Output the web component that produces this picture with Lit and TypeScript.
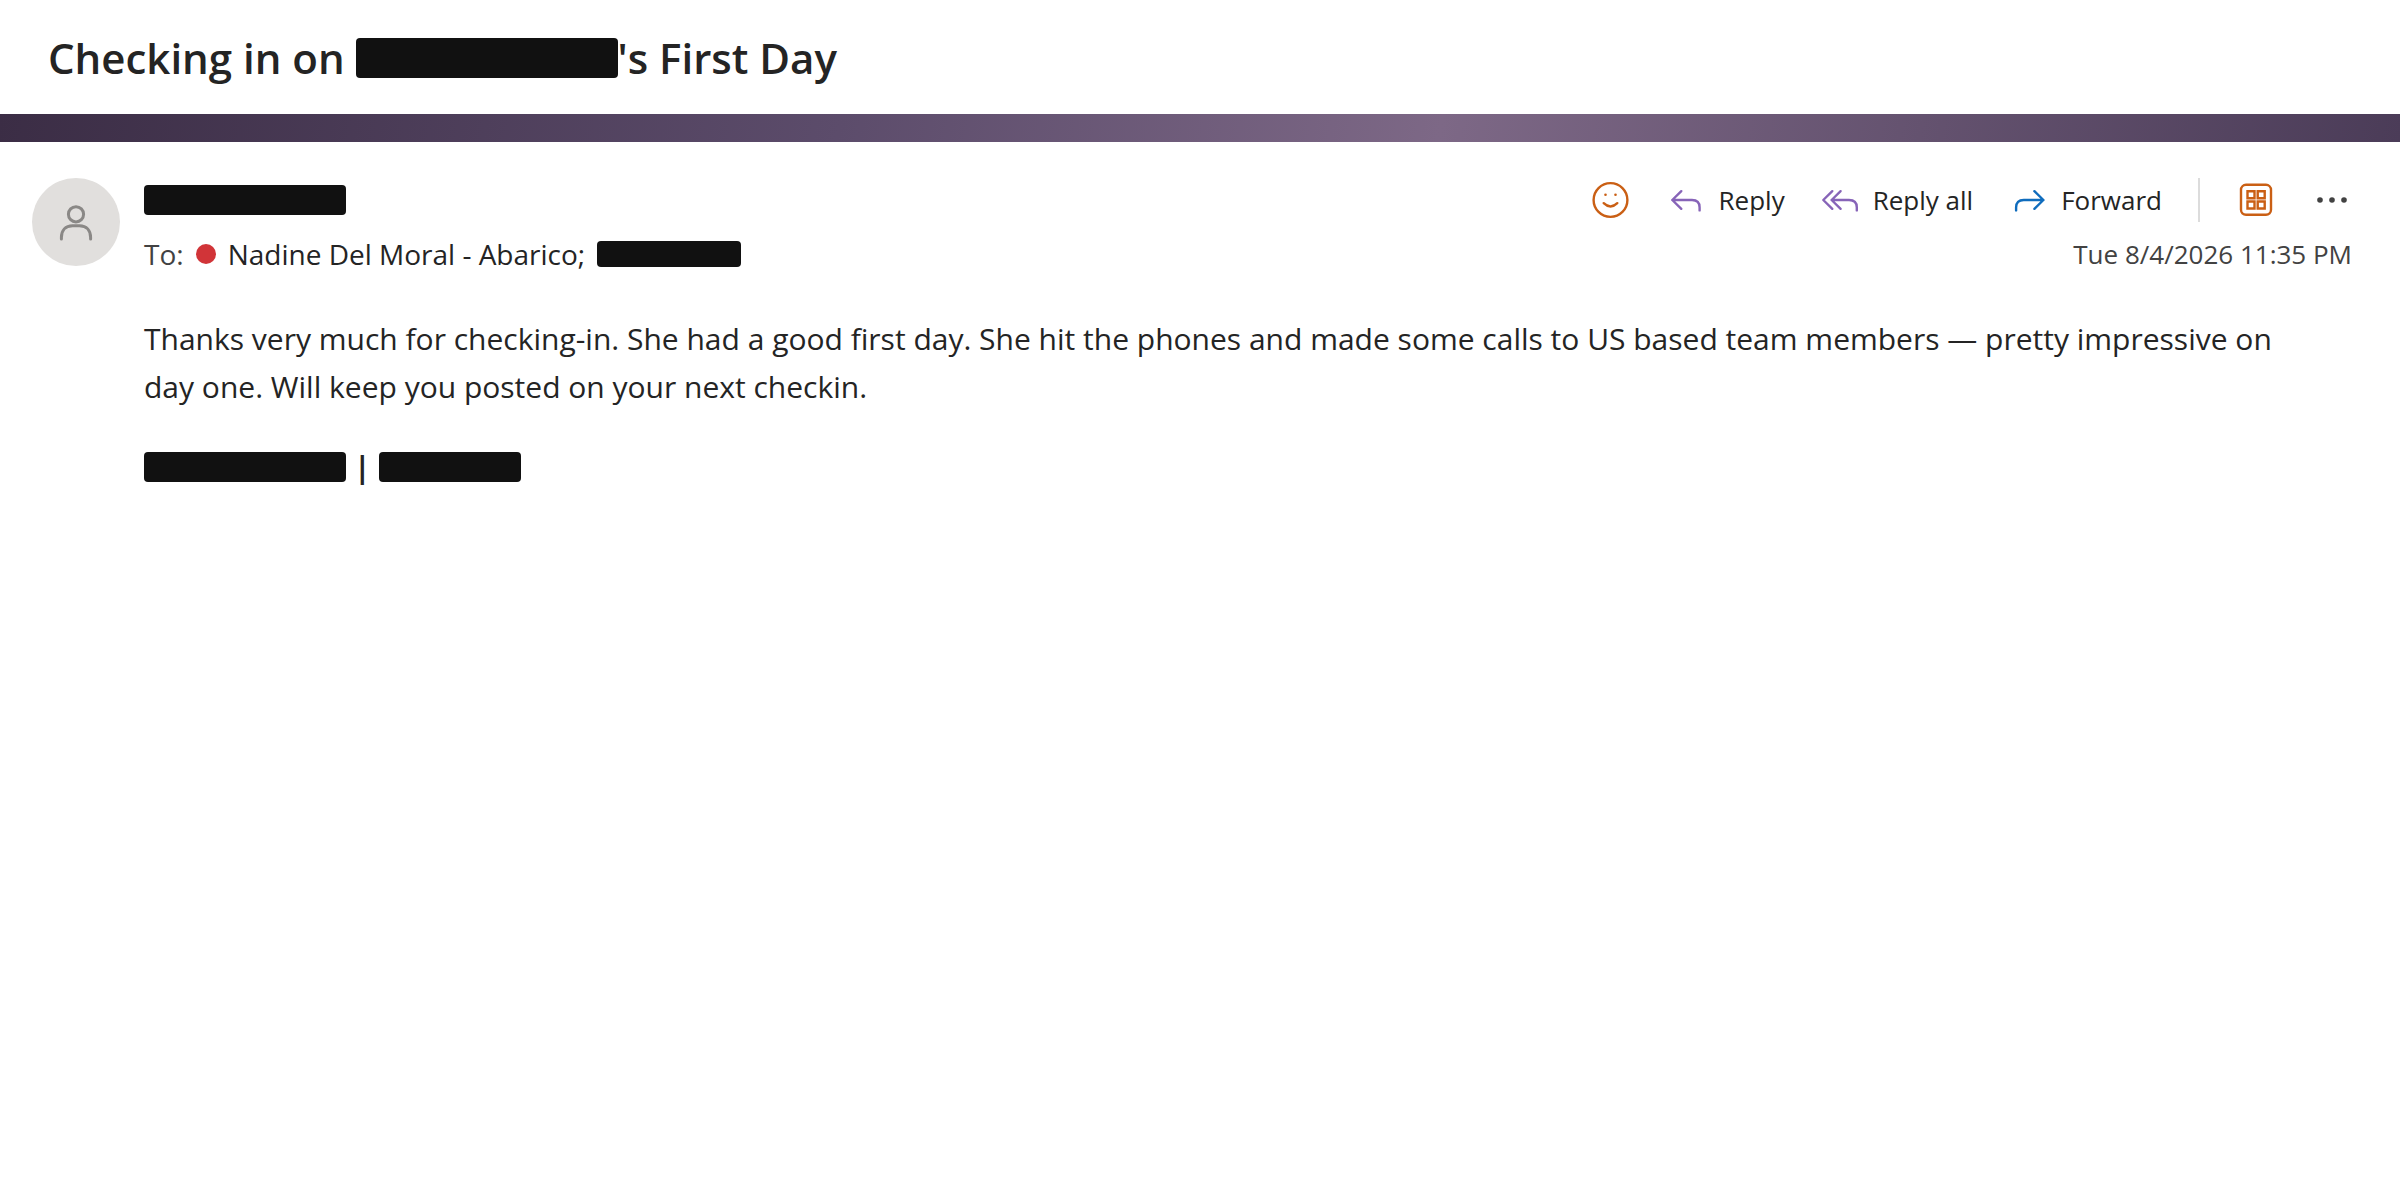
import { LitElement, html, css, svg } from "lit";
import { customElement } from "lit/decorators.js";

const person = svg`<svg class="person" viewBox="0 0 44 44" aria-hidden="true">
  <circle cx="22" cy="14.3" r="7.6"/><path d="M7.4 39V37.5C7.4 30.5 11.5 25.7 18.5 25.7H25.5C32.5 25.7 36.6 30.5 36.6 37.5V39"/></svg>`;

const smile = svg`<svg class="icon orange" viewBox="0 0 40 40" aria-hidden="true">
  <circle cx="19.5" cy="20" r="16.9"/><path d="M12.7 23.2Q19.5 29.8 26.3 23.2"/>
  <circle class="solid" cx="14.5" cy="14.8" r="1.3"/><circle class="solid" cx="24.5" cy="14.8" r="1.3"/></svg>`;

const reply = svg`<svg class="icon purple" viewBox="0 0 40 40" aria-hidden="true">
  <path d="M14.3 11.2L5.3 20L14.3 28.8M5.3 20H25C30 20 32.6 22.6 32.6 27.4V30.4"/></svg>`;

const replyAll = svg`<svg class="icon purple" viewBox="0 0 40 40" aria-hidden="true">
  <path d="M11.3 11.2L2.3 20L11.3 28.8M19.6 11.2L10.6 20L19.6 28.8M10.6 20H28C33 20 35.8 22.6 35.8 27.4V30.4"/></svg>`;

const forward = svg`<svg class="icon blue" viewBox="0 0 40 40" aria-hidden="true">
  <path d="M25.4 11.2L34.4 20L25.4 28.8M34.4 20H14.7C9.7 20 7.1 22.6 7.1 27.4V30.4"/></svg>`;

const apps = svg`<svg class="icon orange" viewBox="0 0 40 40" aria-hidden="true">
  <rect x="5" y="4.8" width="30" height="30" rx="5"/>
  <path class="tiles" d="M11.5 11.3h7v7h-7zM21.7 11.3h7v7h-7zM11.5 21.5h7v7h-7zM21.7 21.5h7v7h-7z"/></svg>`;

const more = svg`<svg class="icon grey" viewBox="0 0 40 40" aria-hidden="true">
  <circle class="solid" cx="8" cy="20" r="2.8"/><circle class="solid" cx="20" cy="20" r="2.8"/><circle class="solid" cx="32" cy="20" r="2.8"/></svg>`;

@customElement("app-root")
export class AppRoot extends LitElement {
  static styles = css`
    :host {
      display: block;
      min-height: 100vh;
      background: #fff;
      color: #242424;
      font-family: "Open Sans", sans-serif;
    }
    .subject {
      display: flex;
      align-items: center;
      margin: 0;
      padding: 32px 48px 30px;
      font-size: 42px;
      font-weight: 600;
      line-height: 52px;
      white-space: pre;
    }
    .band {
      height: 28px;
      background: linear-gradient(100deg, #3b2d45 0%, #5c4c6b 35%, #7d6886 60%, #4b3c58 100%);
    }
    .redacted {
      display: inline-block;
      border-radius: 4px;
      background: #111;
    }
    .r-subject { width: 262px; height: 40px; }
    .r-name { width: 202px; height: 30px; }
    .r-to { width: 144px; height: 26px; }
    .r-role { width: 142px; height: 30px; }
    .message {
      display: grid;
      grid-template-columns: 88px 1fr;
      column-gap: 24px;
      padding: 36px 48px 48px 32px;
    }
    .avatar {
      display: flex;
      align-items: center;
      justify-content: center;
      width: 88px;
      height: 88px;
      border-radius: 50%;
      background: #e1dfdd;
    }
    .person {
      width: 44px;
      height: 44px;
      fill: none;
      stroke: #8a8886;
      stroke-width: 3;
      stroke-linecap: round;
    }
    .row {
      display: flex;
      align-items: center;
      justify-content: space-between;
    }
    .top { height: 44px; }
    .second { margin-top: 12px; line-height: 40px; }
    .to { display: flex; align-items: center; font-size: 28px; }
    .label, .date { color: #424242; }
    .dot {
      width: 20px;
      height: 20px;
      margin: 0 12px;
      border-radius: 50%;
      background: #d13438;
    }
    .to .redacted { margin-left: 12px; }
    .date { font-size: 26px; }
    .actions { display: flex; align-items: center; gap: 36px; }
    button {
      display: flex;
      align-items: center;
      gap: 12px;
      padding: 0;
      border: 0;
      background: none;
      color: inherit;
      font: inherit;
      font-size: 26px;
      line-height: 40px;
      cursor: pointer;
    }
    .icon {
      width: 40px;
      height: 40px;
      fill: none;
      stroke: currentColor;
      stroke-width: 2.4;
      stroke-linecap: round;
      stroke-linejoin: round;
    }
    .tiles { stroke-linejoin: miter; }
    .solid { fill: currentColor; stroke: none; }
    .orange { color: #ca5f14; }
    .purple { color: #8764b8; }
    .blue { color: #0f6cbd; }
    .grey { color: #424242; }
    .divider { width: 2px; height: 44px; background: #dcdcdc; }
    .body {
      grid-column: 2;
      margin-top: 41px;
      padding-right: 48px;
      font-size: 30px;
      line-height: 48px;
    }
    .body p { margin: 0 0 32px; }
    .body .signature {
      display: flex;
      align-items: center;
      gap: 8px;
      margin: 0;
      font-weight: 700;
    }
  `;

  render() {
    return html`
      <h1 class="subject"><span>Checking in on </span><span class="redacted r-subject"></span><span>'s First Day</span></h1>
      <div class="band"></div>
      <article class="message">
        <div class="avatar">${person}</div>
        <header>
          <div class="row top">
            <span class="redacted r-name"></span>
            <div class="actions">
              <button aria-label="React">${smile}</button>
              <button>${reply}<span>Reply</span></button>
              <button>${replyAll}<span>Reply all</span></button>
              <button>${forward}<span>Forward</span></button>
              <span class="divider"></span>
              <button aria-label="Apps">${apps}</button>
              <button aria-label="More actions">${more}</button>
            </div>
          </div>
          <div class="row second">
            <div class="to">
              <span class="label">To:</span><span class="dot"></span><span>Nadine Del Moral - Abarico;</span><span class="redacted r-to"></span>
            </div>
            <time class="date" datetime="2026-08-04T23:35">Tue 8/4/2026 11:35 PM</time>
          </div>
        </header>
        <div class="body">
          <p>Thanks very much for checking-in. She had a good first day. She hit the phones and made some calls to US based team members — pretty impressive on day one. Will keep you posted on your next checkin.</p>
          <p class="signature"><span class="redacted r-name"></span><span>|</span><span class="redacted r-role"></span></p>
        </div>
      </article>
    `;
  }
}
